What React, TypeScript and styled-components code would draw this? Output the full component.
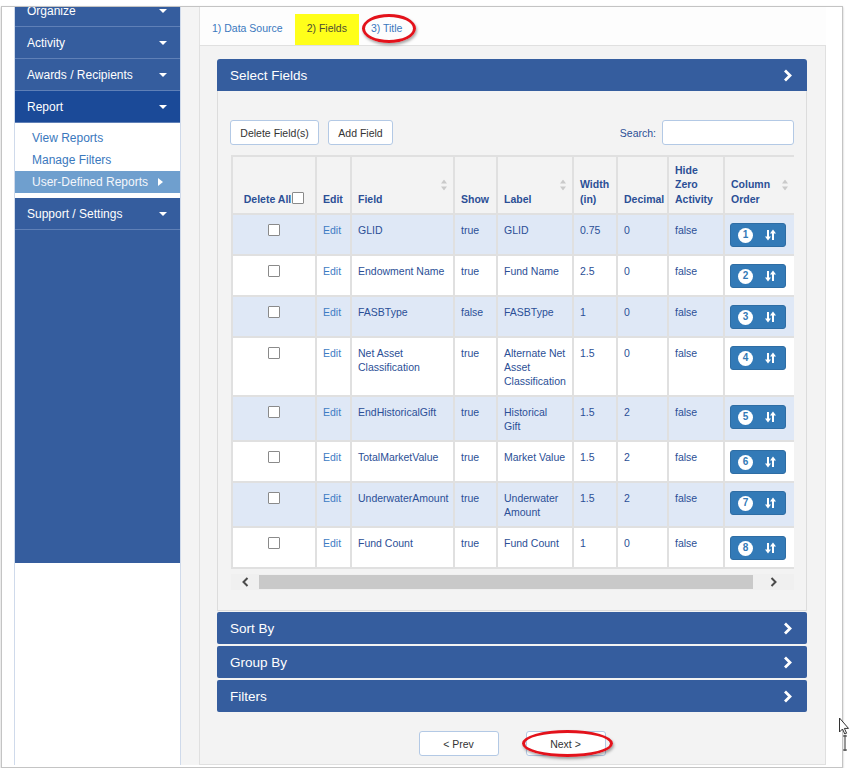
import React from "react";
import styled, { createGlobalStyle } from "styled-components";

const GlobalStyle = createGlobalStyle`
  html, body {
    margin: 0;
    padding: 0;
    background: #fff;
  }
  body {
    font-family: "Liberation Sans", Arial, sans-serif;
  }
  * {
    box-sizing: border-box;
  }
`;

const Frame = styled.div`
  position: relative;
  display: flex;
  width: 842px;
  height: 762px;
  margin: 6px 0 0 1px;
  padding: 0 0 2px 12px;
  border: 1px solid #c4c4c4;
  box-shadow: 0 1px 2px rgba(0, 0, 0, 0.25);
  background: #fff;
`;

/* ---------- sidebar ---------- */

const Sidebar = styled.nav`
  flex: none;
  width: 167px;
  display: flex;
  flex-direction: column;
  overflow: hidden;
  border-left: 1px solid #cfdaeb;
  border-right: 1px solid #cfdaeb;
  background: #fff;
`;

const NavRow = styled.div<{ $active?: boolean; $clipped?: boolean }>`
  flex: none;
  height: 32px;
  display: flex;
  align-items: center;
  justify-content: space-between;
  padding: 0 13px 0 12px;
  margin-top: ${(p) => (p.$clipped ? "-12px" : "0")};
  background: ${(p) => (p.$active ? "#1b4a98" : "#355d9e")};
  border-bottom: 1px solid #5f80b7;
  color: #fff;
  font-size: 12px;
`;

const Caret = styled.span`
  width: 0;
  height: 0;
  border-left: 4px solid transparent;
  border-right: 4px solid transparent;
  border-top: 4px solid #fff;
`;

const SubMenu = styled.div`
  flex: none;
  padding: 4px 0 5px;
`;

const SubLink = styled.div<{ $current?: boolean }>`
  display: flex;
  align-items: center;
  height: 22px;
  padding-left: 17px;
  font-size: 12px;
  color: ${(p) => (p.$current ? "#f3f6fb" : "#3a78bd")};
  background: ${(p) => (p.$current ? "#6f9fce" : "transparent")};
`;

const SubArrow = styled.span`
  width: 0;
  height: 0;
  margin-left: 10px;
  border-top: 4px solid transparent;
  border-bottom: 4px solid transparent;
  border-left: 5px solid #fff;
`;

const NavFill = styled.div`
  flex: none;
  height: 333px;
  background: #355d9e;
`;

const Gutter = styled.div`
  flex: none;
  width: 18px;
  background: #f4f4f4;
`;

/* ---------- main ---------- */

const Main = styled.main`
  flex: none;
  width: 627px;
  display: flex;
  flex-direction: column;
`;

const Tabs = styled.div`
  flex: none;
  height: 38px;
  display: flex;
  align-items: flex-end;
  background: #fdfdfd;
  border-left: 1px solid #e2e2e2;
`;

const Tab = styled.div<{ $selected?: boolean }>`
  position: relative;
  height: 31px;
  line-height: 29px;
  padding: 0 12px;
  font-size: 10.5px;
  color: ${(p) => (p.$selected ? "#4d4d33" : "#3a78bd")};
  background: ${(p) => (p.$selected ? "#ffff1a" : "transparent")};
`;

const RedRing = styled.span<{ $w: number; $h: number; $l: number; $t: number }>`
  position: absolute;
  left: ${(p) => p.$l}px;
  top: ${(p) => p.$t}px;
  width: ${(p) => p.$w}px;
  height: ${(p) => p.$h}px;
  border: 3px solid #e3121b;
  border-radius: 50%;
  box-shadow: 1px 2px 3px rgba(0, 0, 0, 0.35);
  pointer-events: none;
`;

const Panel = styled.div`
  flex: 1;
  display: flex;
  flex-direction: column;
  background: #f3f3f3;
  border: 1px solid #e0e0e0;
  padding: 13px 18px 0 17px;
`;

const SectionHeader = styled.div<{ $gap?: number; $open?: boolean }>`
  flex: none;
  height: 32px;
  margin-top: ${(p) => p.$gap ?? 0}px;
  display: flex;
  align-items: center;
  justify-content: space-between;
  padding: 0 15px 0 13px;
  background: #355d9e;
  border-radius: ${(p) => (p.$open ? "3px 3px 0 0" : "2px")};
  color: #fff;
  font-size: 13.5px;
`;

const SectionBody = styled.div`
  background: #f3f3f3;
  border: 1px solid #dcdcdc;
  border-top: 0;
  padding: 29px 12px 20px 12px;
`;

const Toolbar = styled.div`
  display: flex;
  align-items: center;
  justify-content: space-between;
  height: 25px;
`;

const ButtonGroup = styled.div`
  display: flex;
  gap: 9px;
`;

const Button = styled.button<{ $width?: number }>`
  position: relative;
  height: 25px;
  width: ${(p) => (p.$width ? `${p.$width}px` : "auto")};
  padding: 0;
  border: 1px solid #b3c9e5;
  border-radius: 3px;
  background: #fff;
  font-family: inherit;
  font-size: 10.5px;
  color: #333;
  white-space: nowrap;
`;

const SearchBox = styled.label`
  display: flex;
  align-items: center;
  gap: 6px;
  font-size: 10.5px;
  color: #2b4f96;
`;

const SearchInput = styled.input`
  width: 132px;
  height: 25px;
  border: 1px solid #b3c9e5;
  border-radius: 3px;
  background: #fff;
`;

const TableWrap = styled.div`
  width: 563px;
  margin: 10px 0 0 1px;
  overflow: hidden;
`;

const Table = styled.table`
  width: 563px;
  table-layout: fixed;
  border-collapse: collapse;
  font-size: 10.5px;
  line-height: 14px;
  color: #2b4f96;
`;

const Th = styled.th<{ $center?: boolean }>`
  position: relative;
  height: 58px;
  padding: 0 0 7px ${(p) => (p.$center ? "0" : "6px")};
  vertical-align: bottom;
  text-align: ${(p) => (p.$center ? "center" : "left")};
  font-weight: bold;
  line-height: 14.5px;
  white-space: nowrap;
  background: #f3f3f3;
  border: 2px solid #e0e0e0;
`;

const SortIcon = styled.svg`
  position: absolute;
  right: 6px;
  top: 50%;
  transform: translateY(-50%);
`;

const Row = styled.tr<{ $odd: boolean }>`
  background: ${(p) => (p.$odd ? "#dfe8f6" : "#fff")};
`;

const Td = styled.td<{ $center?: boolean }>`
  padding: 8px 0 7px ${(p) => (p.$center ? "0" : "6px")};
  vertical-align: top;
  text-align: ${(p) => (p.$center ? "center" : "left")};
  white-space: nowrap;
  border: 2px solid #e0e0e0;
`;

const EditLink = styled.span`
  color: #3d7cc4;
`;

const Check = styled.span<{ $inline?: boolean }>`
  display: inline-block;
  width: 12px;
  height: 12px;
  margin: ${(p) => (p.$inline ? "0 0 0 1px" : "1px 0 0")};
  vertical-align: ${(p) => (p.$inline ? "-1px" : "top")};
  border: 1px solid #8a8a8a;
  border-radius: 1px;
  background: #fff;
`;

const OrderButton = styled.div`
  display: flex;
  align-items: center;
  justify-content: space-between;
  width: 56px;
  height: 24px;
  margin-left: -1px;
  padding: 0 9px 0 7px;
  background: #337ab7;
  border: 1px solid #2e6da4;
  border-radius: 3px;
`;

const Badge = styled.span`
  display: flex;
  align-items: center;
  justify-content: center;
  width: 15px;
  height: 15px;
  border-radius: 50%;
  background: #fff;
  color: #337ab7;
  font-size: 10px;
  font-weight: bold;
`;

const Scrollbar = styled.div`
  display: flex;
  align-items: center;
  width: 563px;
  height: 16px;
  margin: 5px 0 0 1px;
  background: #f0f0f0;
`;

const ScrollArrow = styled.div<{ $width: number }>`
  flex: none;
  width: ${(p) => p.$width}px;
  display: flex;
  align-items: center;
  justify-content: center;
`;

const ScrollThumb = styled.div`
  flex: none;
  width: 494px;
  height: 14px;
  background: #c9c9c9;
`;

const Footer = styled.div`
  display: flex;
  justify-content: center;
  gap: 27px;
  margin-top: 19px;
`;

const Cursor = styled.svg`
  position: absolute;
  left: 836px;
  top: 710px;
`;

/* ---------- data ---------- */

type FieldRow = {
  field: string[];
  show: string;
  label: string[];
  width: string;
  decimal: string;
  hide: string;
};

const rows: FieldRow[] = [
  { field: ["GLID"], show: "true", label: ["GLID"], width: "0.75", decimal: "0", hide: "false" },
  { field: ["Endowment Name"], show: "true", label: ["Fund Name"], width: "2.5", decimal: "0", hide: "false" },
  { field: ["FASBType"], show: "false", label: ["FASBType"], width: "1", decimal: "0", hide: "false" },
  {
    field: ["Net Asset", "Classification"],
    show: "true",
    label: ["Alternate Net", "Asset", "Classification"],
    width: "1.5",
    decimal: "0",
    hide: "false",
  },
  { field: ["EndHistoricalGift"], show: "true", label: ["Historical", "Gift"], width: "1.5", decimal: "2", hide: "false" },
  { field: ["TotalMarketValue"], show: "true", label: ["Market Value"], width: "1.5", decimal: "2", hide: "false" },
  { field: ["UnderwaterAmount"], show: "true", label: ["Underwater", "Amount"], width: "1.5", decimal: "2", hide: "false" },
  { field: ["Fund Count"], show: "true", label: ["Fund Count"], width: "1", decimal: "0", hide: "false" },
];

const colWidths = [84, 35, 103, 43, 76, 44, 51, 56, 71];

const Lines = ({ lines }: { lines: string[] }) => (
  <>
    {lines.map((l, i) => (
      <React.Fragment key={i}>
        {i > 0 && <br />}
        {l}
      </React.Fragment>
    ))}
  </>
);

const Chevron = () => (
  <svg width="9" height="13" viewBox="0 0 9 13">
    <polyline points="2,1.5 7,6.5 2,11.5" fill="none" stroke="#fff" strokeWidth="2.8" />
  </svg>
);

const Sorter = () => (
  <SortIcon width="6" height="11" viewBox="0 0 6 11">
    <path d="M3 0 L6 4 L0 4 Z M0 7 L6 7 L3 11 Z" fill="#cacaca" />
  </SortIcon>
);

const OrderArrows = () => (
  <svg width="11" height="12" viewBox="0 0 11 12">
    <path d="M3 1 V9" stroke="#fff" strokeWidth="2" />
    <path d="M0 7.5 H6 L3 11.5 Z" fill="#fff" />
    <path d="M8 3 V11" stroke="#fff" strokeWidth="2" />
    <path d="M5 4.5 H11 L8 0.5 Z" fill="#fff" />
  </svg>
);

const ScrollChevron = ({ dir }: { dir: "left" | "right" }) => (
  <svg width="7" height="10" viewBox="0 0 7 10">
    <polyline
      points={dir === "left" ? "5.5,1 1.5,5 5.5,9" : "1.5,1 5.5,5 1.5,9"}
      fill="none"
      stroke="#4a4a4a"
      strokeWidth="2"
    />
  </svg>
);

export default function App() {
  return (
    <>
      <GlobalStyle />
      <Frame>
        <Sidebar>
          <NavRow $clipped>
            Organize
            <Caret />
          </NavRow>
          <NavRow>
            Activity
            <Caret />
          </NavRow>
          <NavRow>
            Awards / Recipients
            <Caret />
          </NavRow>
          <NavRow $active>
            Report
            <Caret />
          </NavRow>
          <SubMenu>
            <SubLink>View Reports</SubLink>
            <SubLink>Manage Filters</SubLink>
            <SubLink $current>
              User-Defined Reports
              <SubArrow />
            </SubLink>
          </SubMenu>
          <NavRow>
            Support / Settings
            <Caret />
          </NavRow>
          <NavFill />
        </Sidebar>

        <Gutter />

        <Main>
          <Tabs>
            <Tab>1) Data Source</Tab>
            <Tab $selected>2) Fields</Tab>
            <Tab>
              3) Title
              <RedRing $l={3} $t={0} $w={54} $h={29} />
            </Tab>
          </Tabs>

          <Panel>
            <SectionHeader $open>
              Select Fields
              <Chevron />
            </SectionHeader>
            <SectionBody>
              <Toolbar>
                <ButtonGroup>
                  <Button $width={89}>Delete Field(s)</Button>
                  <Button $width={65}>Add Field</Button>
                </ButtonGroup>
                <SearchBox>
                  Search:
                  <SearchInput type="text" />
                </SearchBox>
              </Toolbar>

              <TableWrap>
                <Table>
                  <colgroup>
                    {colWidths.map((w, i) => (
                      <col key={i} style={{ width: w }} />
                    ))}
                  </colgroup>
                  <thead>
                    <tr>
                      <Th $center>
                        Delete All
                        <Check $inline />
                      </Th>
                      <Th>Edit</Th>
                      <Th>
                        Field
                        <Sorter />
                      </Th>
                      <Th>Show</Th>
                      <Th>
                        Label
                        <Sorter />
                      </Th>
                      <Th>
                        Width
                        <br />
                        (in)
                      </Th>
                      <Th>Decimal</Th>
                      <Th>
                        Hide
                        <br />
                        Zero
                        <br />
                        Activity
                      </Th>
                      <Th>
                        Column
                        <br />
                        Order
                        <Sorter />
                      </Th>
                    </tr>
                  </thead>
                  <tbody>
                    {rows.map((r, i) => (
                      <Row key={i} $odd={i % 2 === 0}>
                        <Td $center>
                          <Check />
                        </Td>
                        <Td>
                          <EditLink>Edit</EditLink>
                        </Td>
                        <Td>
                          <Lines lines={r.field} />
                        </Td>
                        <Td>{r.show}</Td>
                        <Td>
                          <Lines lines={r.label} />
                        </Td>
                        <Td>{r.width}</Td>
                        <Td>{r.decimal}</Td>
                        <Td>{r.hide}</Td>
                        <Td>
                          <OrderButton>
                            <Badge>{i + 1}</Badge>
                            <OrderArrows />
                          </OrderButton>
                        </Td>
                      </Row>
                    ))}
                  </tbody>
                </Table>
              </TableWrap>

              <Scrollbar>
                <ScrollArrow $width={28}>
                  <ScrollChevron dir="left" />
                </ScrollArrow>
                <ScrollThumb />
                <ScrollArrow $width={41}>
                  <ScrollChevron dir="right" />
                </ScrollArrow>
              </Scrollbar>
            </SectionBody>

            <SectionHeader $gap={1}>
              Sort By
              <Chevron />
            </SectionHeader>
            <SectionHeader $gap={2}>
              Group By
              <Chevron />
            </SectionHeader>
            <SectionHeader $gap={2}>
              Filters
              <Chevron />
            </SectionHeader>

            <Footer>
              <Button $width={80}>&lt; Prev</Button>
              <Button $width={80}>
                Next &gt;
                <RedRing $l={-5} $t={-2} $w={91} $h={27} />
              </Button>
            </Footer>
          </Panel>
        </Main>

        <Cursor width="14" height="36" viewBox="0 0 14 36">
          <path
            d="M1.5 1 L1.5 15 L4.5 12 L6.8 17 L8.6 16.2 L6.4 11.4 L10.5 11.4 Z"
            fill="#fff"
            stroke="#333"
            strokeWidth="1"
          />
          <path d="M7 18 V34 M5 19 H9 M5 33 H9" stroke="#333" strokeWidth="1" fill="none" />
        </Cursor>
      </Frame>
    </>
  );
}
